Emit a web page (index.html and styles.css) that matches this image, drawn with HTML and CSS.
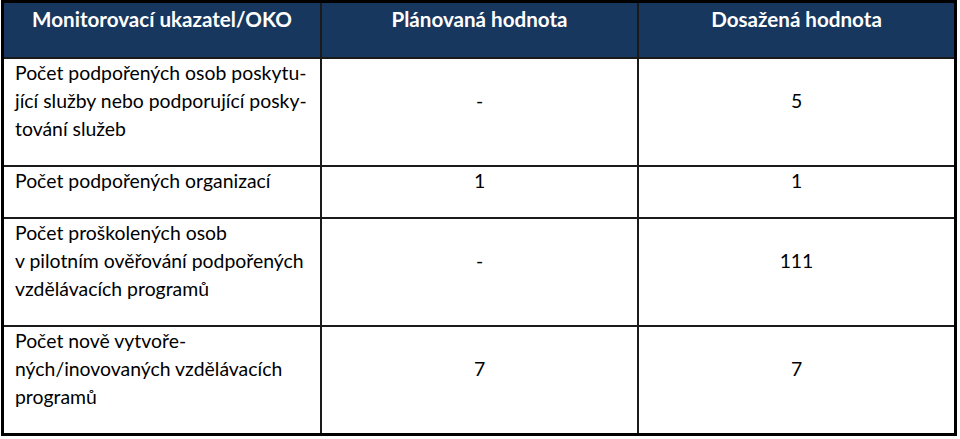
FILE: index.html
```html
<!DOCTYPE html>
<html lang="cs">
<head>
<meta charset="utf-8">
<link rel="stylesheet" href="styles.css">
</head>
<body>
<div class="wrap">
<table class="grid">
  <colgroup>
    <col class="c1"><col class="c2"><col class="c3">
  </colgroup>
  <thead>
    <tr>
      <th>Monitorovací ukazatel/OKO</th>
      <th>Plánovaná hodnota</th>
      <th class="last">Dosažená hodnota</th>
    </tr>
  </thead>
  <tbody>
    <tr class="r1">
      <td class="label">Počet podpořených osob poskytu-<br>jící služby nebo podporující posky-<br>tování služeb</td>
      <td class="val">-</td>
      <td class="val last">5</td>
    </tr>
    <tr class="r2">
      <td class="label">Počet podpořených organizací</td>
      <td class="val">1</td>
      <td class="val last">1</td>
    </tr>
    <tr class="r3">
      <td class="label">Počet proškolených osob<br>v pilotním ověřování podpořených<br>vzdělávacích programů</td>
      <td class="val">-</td>
      <td class="val last">111</td>
    </tr>
    <tr class="r4 end">
      <td class="label">Počet nově vytvoře-<br>ných/inovovaných vzdělávacích<br>programů</td>
      <td class="val">7</td>
      <td class="val last">7</td>
    </tr>
  </tbody>
</table>
</div>
</body>
</html>
```

FILE: styles.css
```css
html, body {
  margin: 0;
  padding: 0;
  background: #fff;
}

.wrap {
  padding: 0 0 0 1px;
}

.grid {
  width: 956px;
  border-collapse: separate;
  border-spacing: 0;
  border: 3px solid #000;
  table-layout: fixed;
  font-family: Lato, "Liberation Sans", sans-serif;
  color: #000;
}

.c1 { width: 318px; }
.c2 { width: 317px; }
.c3 { width: 315px; }

th, td {
  border-right: 2px solid #1a1a1a;
  border-bottom: 2px solid #1a1a1a;
  padding: 0;
}

th.last, td.last {
  border-right: none;
}

tr.end td {
  border-bottom: none;
}

th {
  background: #17375e;
  color: #fff;
  font-weight: bold;
  font-size: 20.6px;
  height: 56px;
  vertical-align: top;
  padding-top: 4px;
  line-height: 24px;
  box-sizing: border-box;
}

td {
  font-size: 19.4px;
  line-height: 28px;
  padding-bottom: 22px;
  vertical-align: middle;
}

td.label {
  padding-left: 11px;
  text-align: left;
}

td.val {
  text-align: center;
}
```
